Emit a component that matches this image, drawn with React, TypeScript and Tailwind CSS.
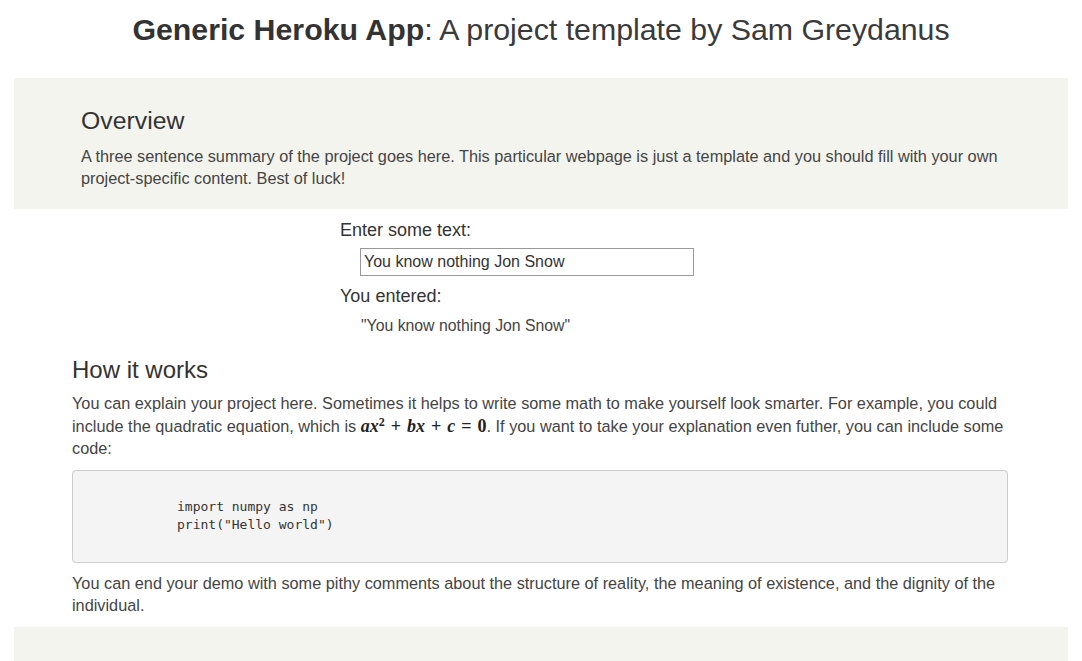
export default function App() {
  const sans = { fontFamily: '"Liberation Sans", Arial, sans-serif' };
  return (
    <div className="min-h-[661px] bg-white text-[#333]" style={sans}>
      <h1 className="pt-[12px] text-center text-[30.3px] leading-[35px] text-[#333]">
        <span className="font-bold">Generic Heroku App</span>
        <span className="text-[#3a3a3a]">: A project template by Sam Greydanus</span>
      </h1>
      <div className="mx-[14px] mt-[31px] bg-[#f4f4ef] px-[67px] pt-[28px] pb-[20px]">
        <h2 className="text-[24.8px] leading-[30px] text-[#333]">Overview</h2>
        <p className="mt-[9px] text-[16.3px] leading-[22px] text-[#444]">
          A three sentence summary of the project goes here. This particular webpage is just a template and you should fill with your own project-specific content. Best of luck!
        </p>
      </div>
      <div className="mx-auto w-[402px] pt-[10px]">
        <div className="text-[18px] leading-[22px] text-[#333]">Enter some text:</div>
        <div className="mt-[7px] pl-[20px]">
          <input
            className="h-[28px] w-[334px] border border-[#999] px-[3px] text-[16px] text-[#333] outline-none"
            style={sans}
            defaultValue="You know nothing Jon Snow"
          />
        </div>
        <div className="mt-[9px] text-[18px] leading-[22px] text-[#333]">You entered:</div>
        <div className="mt-[8px] pl-[21px] text-[15.8px] leading-[22px] text-[#444]">"You know nothing Jon Snow"</div>
      </div>
      <div className="mx-auto w-[938px] pt-[18px]">
        <h2 className="text-[24px] leading-[30px] text-[#333]">How it works</h2>
        <p className="mt-[7px] text-[16.3px] leading-[22.5px] text-[#444]">
          You can explain your project here. Sometimes it helps to write some math to make yourself look smarter. For example, you could include the quadratic equation, which is{' '}
          <span className="text-[18px] font-bold text-[#222]" style={{ fontFamily: '"Liberation Serif", "Times New Roman", serif' }}>
            <i>ax</i>
            <sup className="text-[12px] not-italic">2</sup>
            <span className="mx-[6px]">+</span>
            <i>bx</i>
            <span className="mx-[6px]">+</span>
            <i>c</i>
            <span className="mx-[6px]">=</span>0
          </span>
          . If you want to take your explanation even futher, you can include some code:
        </p>
        <pre
          className="mt-[10px] mr-[2px] rounded-[4px] border border-[#ccc] bg-[#f4f4f4] pt-[27px] pb-[28px] pl-[104px] text-[13px] leading-[18px] text-[#333]"
          style={{ fontFamily: '"DejaVu Sans Mono", monospace' }}
        >
{`import numpy as np
print("Hello world")`}
        </pre>
        <p className="mt-[9px] text-[16.3px] leading-[22px] text-[#444]">
          You can end your demo with some pithy comments about the structure of reality, the meaning of existence, and the dignity of the individual.
        </p>
      </div>
      <div className="mx-[14px] mt-[11px] h-[40px] bg-[#f4f4ef]" />
    </div>
  );
}
